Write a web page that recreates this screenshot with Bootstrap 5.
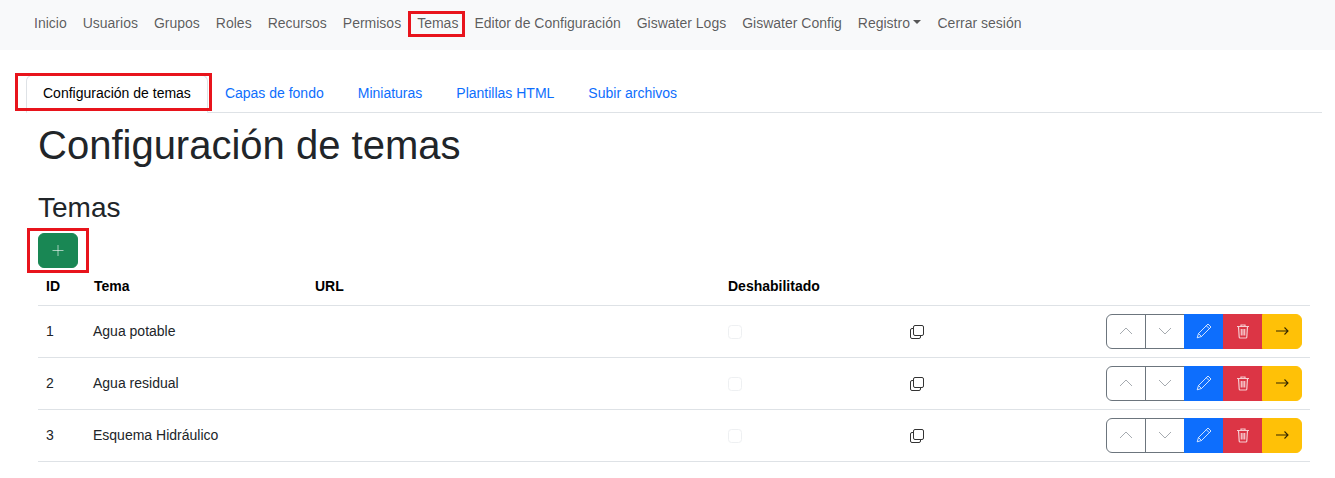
<!DOCTYPE html>
<html lang="es"><head><meta charset="utf-8"><title>Temas</title>
<link href="https://cdn.jsdelivr.net/npm/bootstrap@5.3.0/dist/css/bootstrap.min.css" rel="stylesheet">
<style>
body{font-family:"Liberation Sans",Arial,sans-serif;font-size:14px;overflow:hidden}
.top-bar{height:50px;padding:0 0 4px 26px;align-items:center}
.top-bar .nav-link{color:rgba(0,0,0,.65);padding:8px;font-size:14px;line-height:21px}
.mark-box{position:relative}
.mark-box::after{content:"";position:absolute;border:3px solid #e8141c;pointer-events:none}
.mark-nav::after{left:-1px;right:1px;top:6px;bottom:5px}
.mark-tab::after{left:-11px;right:-4px;top:-2px;bottom:1px}
.mark-add::after{left:-11px;right:-11px;top:-5px;bottom:-5px}
.tab-row{margin:25px 13px 0 26px;font-size:14px}
.tab-row .nav-link{padding:7px 16px 9px;line-height:21px;height:38px}
.tab-row .nav-link.active{color:#000}
.page-body{padding:0 25px 0 38px}
.page-title{font-size:40px;line-height:48px;margin:8px 0 22px}
.sub-title{font-size:28px;line-height:33.6px;margin:0 0 8px}
.btn-add{width:40px;height:35px;padding:0;display:flex;align-items:center;justify-content:center;border-radius:6px}
.grid-table{table-layout:fixed;margin:4px 0 0;width:1272px;font-size:14px}
.grid-table th{padding:4px 8px 8px;line-height:21px;height:33px;color:#000}
.grid-table td{padding:8px;height:52px;vertical-align:middle;line-height:21px}
.grid-table td.name{padding-left:7px}
.grid-table td.copy-cell{padding:9px 8px 7px 7px}
.grid-table td.copy-cell svg{display:block}
.grid-table .form-check-input{margin:1px 0 0;width:14px;height:14px;display:block;opacity:.5}
.act-group .btn{width:40px;height:35px;padding:0;display:flex;align-items:center;justify-content:center}
.act-group .btn svg{display:block}
.btn-move{border-color:#6c757d;color:#6c757d;background:#fff}
.icon-soft{opacity:.6}
</style></head>
<body>
<nav class="navbar navbar-expand bg-body-tertiary top-bar">
<ul class="navbar-nav">
<li class="nav-item"><a class="nav-link" href="#">Inicio</a></li>
<li class="nav-item"><a class="nav-link" href="#">Usuarios</a></li>
<li class="nav-item"><a class="nav-link" href="#">Grupos</a></li>
<li class="nav-item"><a class="nav-link" href="#">Roles</a></li>
<li class="nav-item"><a class="nav-link" href="#">Recursos</a></li>
<li class="nav-item"><a class="nav-link" href="#">Permisos</a></li>
<li class="nav-item mark-box mark-nav"><a class="nav-link" href="#">Temas</a></li>
<li class="nav-item"><a class="nav-link" href="#">Editor de Configuración</a></li>
<li class="nav-item"><a class="nav-link" href="#">Giswater Logs</a></li>
<li class="nav-item"><a class="nav-link" href="#">Giswater Config</a></li>
<li class="nav-item dropdown"><a class="nav-link dropdown-toggle" href="#">Registro</a></li>
<li class="nav-item"><a class="nav-link" href="#">Cerrar sesión</a></li>
</ul>
</nav>
<ul class="nav nav-tabs tab-row">
<li class="nav-item mark-box mark-tab"><a class="nav-link active" href="#">Configuración de temas</a></li>
<li class="nav-item"><a class="nav-link" href="#">Capas de fondo</a></li>
<li class="nav-item"><a class="nav-link" href="#">Miniaturas</a></li>
<li class="nav-item"><a class="nav-link" href="#">Plantillas HTML</a></li>
<li class="nav-item"><a class="nav-link" href="#">Subir archivos</a></li>
</ul>
<main class="page-body">
<h1 class="page-title">Configuración de temas</h1>
<h3 class="sub-title">Temas</h3>
<div class="mark-box mark-add d-inline-block align-top">
<button class="btn btn-success btn-add" type="button" aria-label="Añadir"><svg width="16" height="16" viewBox="0 0 16 16" fill="none" stroke="#fff" stroke-opacity=".6" stroke-width="1"><path d="M8 3v11M2.500 8.500h11"/></svg></button>
</div>
<table class="table grid-table">
<colgroup><col style="width:48px"><col style="width:221px"><col style="width:413px"><col style="width:182px"><col style="width:192px"><col></colgroup>
<thead><tr><th>ID</th><th>Tema</th><th>URL</th><th>Deshabilitado</th><th></th><th></th></tr></thead>
<tbody>
<tr><td>1</td><td class="name">Agua potable</td><td></td><td><input class="form-check-input" type="checkbox" disabled aria-label="Deshabilitado"></td>
<td class="copy-cell"><svg width="16" height="16" viewBox="0 0 16 16" fill="none" stroke="#333" stroke-width="1"><rect x="4.500" y="1.500" width="10" height="10" rx="1.500"/><path d="M4 4.500H3A1.500 1.500 0 0 0 1.500 6v7A1.500 1.500 0 0 0 3 14.500h7a1.500 1.500 0 0 0 1.500-1.500v-1"/></svg></td>
<td class="text-end"><div class="btn-group act-group" role="group">
<button class="btn btn-move" aria-label="Subir"><svg class="icon-soft" width="16" height="16" viewBox="0 0 16 16" fill="none" stroke="currentColor" stroke-width="1"><path d="M2 11 8 5l6 6"/></svg></button>
<button class="btn btn-move" aria-label="Bajar"><svg class="icon-soft" width="16" height="16" viewBox="0 0 16 16" fill="none" stroke="currentColor" stroke-width="1"><path d="M2 5l6 6 6-6"/></svg></button>
<button class="btn btn-primary" aria-label="Editar"><svg width="16" height="16" viewBox="0 0 16 16" fill="none" stroke="#fff" stroke-opacity=".8" stroke-width="1"><path d="M12 1 15 4 5.500 13.500 1.200 14.800 2.500 10.500ZM10.300 2.700l3 3M2.500 10.500l3 3"/></svg></button>
<button class="btn btn-danger" aria-label="Borrar"><svg width="16" height="16" viewBox="0 0 16 16" fill="none" stroke="#fff" stroke-opacity=".75" stroke-width="1.200"><path d="M2 3.500h12M6 3.500V2h4v1.500M3.500 3.500l.7 10.500a1 1 0 0 0 1 1h5.600a1 1 0 0 0 1-1l.7-10.500M6.300 6v6.500M8 6v6.500M9.700 6v6.500"/></svg></button>
<button class="btn btn-warning" aria-label="Abrir"><svg width="16" height="16" viewBox="0 0 16 16" fill="none" stroke="#000" stroke-opacity=".8" stroke-width="1.100"><path d="M2 8h12M10.500 4.500 14 8l-3.500 3.500"/></svg></button>
</div></td></tr>
<tr><td>2</td><td class="name">Agua residual</td><td></td><td><input class="form-check-input" type="checkbox" disabled aria-label="Deshabilitado"></td>
<td class="copy-cell"><svg width="16" height="16" viewBox="0 0 16 16" fill="none" stroke="#333" stroke-width="1"><rect x="4.500" y="1.500" width="10" height="10" rx="1.500"/><path d="M4 4.500H3A1.500 1.500 0 0 0 1.500 6v7A1.500 1.500 0 0 0 3 14.500h7a1.500 1.500 0 0 0 1.500-1.500v-1"/></svg></td>
<td class="text-end"><div class="btn-group act-group" role="group">
<button class="btn btn-move" aria-label="Subir"><svg class="icon-soft" width="16" height="16" viewBox="0 0 16 16" fill="none" stroke="currentColor" stroke-width="1"><path d="M2 11 8 5l6 6"/></svg></button>
<button class="btn btn-move" aria-label="Bajar"><svg class="icon-soft" width="16" height="16" viewBox="0 0 16 16" fill="none" stroke="currentColor" stroke-width="1"><path d="M2 5l6 6 6-6"/></svg></button>
<button class="btn btn-primary" aria-label="Editar"><svg width="16" height="16" viewBox="0 0 16 16" fill="none" stroke="#fff" stroke-opacity=".8" stroke-width="1"><path d="M12 1 15 4 5.500 13.500 1.200 14.800 2.500 10.500ZM10.300 2.700l3 3M2.500 10.500l3 3"/></svg></button>
<button class="btn btn-danger" aria-label="Borrar"><svg width="16" height="16" viewBox="0 0 16 16" fill="none" stroke="#fff" stroke-opacity=".75" stroke-width="1.200"><path d="M2 3.500h12M6 3.500V2h4v1.500M3.500 3.500l.7 10.500a1 1 0 0 0 1 1h5.600a1 1 0 0 0 1-1l.7-10.500M6.300 6v6.500M8 6v6.500M9.700 6v6.500"/></svg></button>
<button class="btn btn-warning" aria-label="Abrir"><svg width="16" height="16" viewBox="0 0 16 16" fill="none" stroke="#000" stroke-opacity=".8" stroke-width="1.100"><path d="M2 8h12M10.500 4.500 14 8l-3.500 3.500"/></svg></button>
</div></td></tr>
<tr><td>3</td><td class="name">Esquema Hidráulico</td><td></td><td><input class="form-check-input" type="checkbox" disabled aria-label="Deshabilitado"></td>
<td class="copy-cell"><svg width="16" height="16" viewBox="0 0 16 16" fill="none" stroke="#333" stroke-width="1"><rect x="4.500" y="1.500" width="10" height="10" rx="1.500"/><path d="M4 4.500H3A1.500 1.500 0 0 0 1.500 6v7A1.500 1.500 0 0 0 3 14.500h7a1.500 1.500 0 0 0 1.500-1.500v-1"/></svg></td>
<td class="text-end"><div class="btn-group act-group" role="group">
<button class="btn btn-move" aria-label="Subir"><svg class="icon-soft" width="16" height="16" viewBox="0 0 16 16" fill="none" stroke="currentColor" stroke-width="1"><path d="M2 11 8 5l6 6"/></svg></button>
<button class="btn btn-move" aria-label="Bajar"><svg class="icon-soft" width="16" height="16" viewBox="0 0 16 16" fill="none" stroke="currentColor" stroke-width="1"><path d="M2 5l6 6 6-6"/></svg></button>
<button class="btn btn-primary" aria-label="Editar"><svg width="16" height="16" viewBox="0 0 16 16" fill="none" stroke="#fff" stroke-opacity=".8" stroke-width="1"><path d="M12 1 15 4 5.500 13.500 1.200 14.800 2.500 10.500ZM10.300 2.700l3 3M2.500 10.500l3 3"/></svg></button>
<button class="btn btn-danger" aria-label="Borrar"><svg width="16" height="16" viewBox="0 0 16 16" fill="none" stroke="#fff" stroke-opacity=".75" stroke-width="1.200"><path d="M2 3.500h12M6 3.500V2h4v1.500M3.500 3.500l.7 10.500a1 1 0 0 0 1 1h5.600a1 1 0 0 0 1-1l.7-10.500M6.300 6v6.500M8 6v6.500M9.700 6v6.500"/></svg></button>
<button class="btn btn-warning" aria-label="Abrir"><svg width="16" height="16" viewBox="0 0 16 16" fill="none" stroke="#000" stroke-opacity=".8" stroke-width="1.100"><path d="M2 8h12M10.500 4.500 14 8l-3.500 3.500"/></svg></button>
</div></td></tr>
</tbody></table>
</main>
<script src="https://cdn.jsdelivr.net/npm/bootstrap@5.3.0/dist/js/bootstrap.bundle.min.js"></script>
</body></html>
